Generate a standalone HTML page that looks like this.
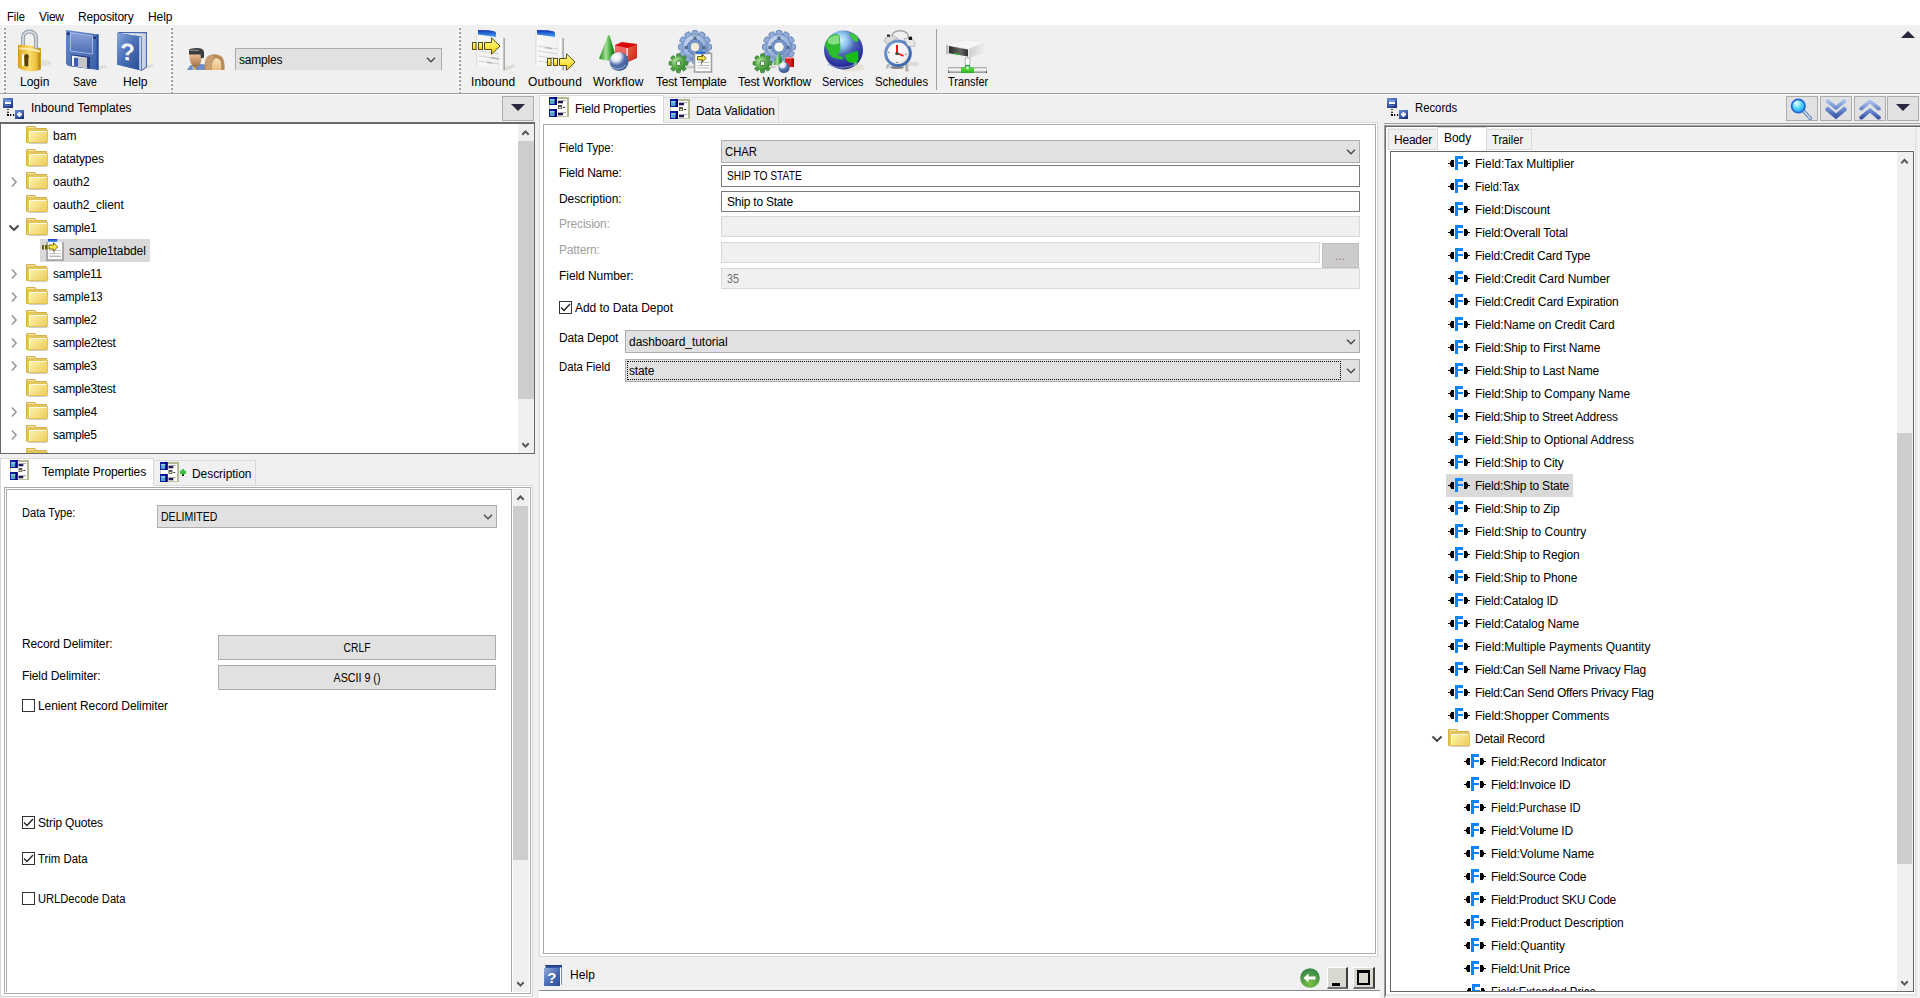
<!DOCTYPE html><html><head><meta charset="utf-8"><title>Template Designer</title><style>
*{box-sizing:border-box;margin:0;padding:0}
html,body{width:1920px;height:998px;overflow:hidden;background:#f0f0f0}
body{font-family:"Liberation Sans",sans-serif;font-size:12px;color:#000;position:relative}
.a{position:absolute}
.t{position:absolute;white-space:nowrap;line-height:16px;height:16px}
.combo{position:absolute;background:#e1e1e1;border:1px solid #adadad}
.inp{position:absolute;background:#fff;border:1px solid #7a7a7a}
.dis{position:absolute;background:#f0f0f0;border:1px solid #d9d9d9;box-shadow:0 1px 0 #fff}
.btn{position:absolute;background:#e1e1e1;border:1px solid #adadad;text-align:center}
.cb{position:absolute;width:13px;height:13px;border:1px solid #333;background:#fff}
.sb{position:absolute;background:#f0f0f0}
.th{position:absolute;background:#cdcdcd}
svg{position:absolute;overflow:visible}
</style></head><body>
<div class="a" style="left:0;top:0;width:1920px;height:25px;background:#fff"></div>
<div class="t" style="left:7px;top:9px;transform:scaleX(0.9305);transform-origin:left center;">File</div>
<div class="t" style="left:39px;top:9px;letter-spacing:-0.274px;">View</div>
<div class="t" style="left:78px;top:9px;letter-spacing:-0.186px;">Repository</div>
<div class="t" style="left:148px;top:9px;letter-spacing:-0.097px;">Help</div>
<div class="a" style="left:0;top:25px;width:1920px;height:68px;background:#f0f0f0"></div>
<div class="a" style="left:0;top:93px;width:1920px;height:1px;background:#a0a0a0"></div>
<div class="a" style="left:0;top:94px;width:1920px;height:1px;background:#fff"></div>
<svg style="left:3px;top:27px" width="3" height="66"><rect width="3" height="66" fill="url(#gripp)"/></svg>
<svg style="left:170px;top:27px" width="3" height="66"><rect width="3" height="66" fill="url(#gripp)"/></svg>
<svg style="left:458px;top:27px" width="3" height="66"><rect width="3" height="66" fill="url(#gripp)"/></svg>
<div class="a" style="left:936px;top:29px;width:1px;height:61px;background:#a0a0a0"></div>
<div class="t" style="left:20px;top:74px;">Login</div>
<div class="t" style="left:73px;top:74px;transform:scaleX(0.8736);transform-origin:left center;">Save</div>
<div class="t" style="left:123px;top:74px;letter-spacing:-0.047px;">Help</div>
<div class="t" style="left:471px;top:74px;letter-spacing:0.144px;">Inbound</div>
<div class="t" style="left:528px;top:74px;letter-spacing:0.160px;">Outbound</div>
<div class="t" style="left:593px;top:74px;letter-spacing:0.184px;">Workflow</div>
<div class="t" style="left:656px;top:74px;letter-spacing:-0.264px;">Test Template</div>
<div class="t" style="left:738px;top:74px;letter-spacing:-0.105px;">Test Workflow</div>
<div class="t" style="left:822px;top:74px;transform:scaleX(0.9019);transform-origin:left center;">Services</div>
<div class="t" style="left:875px;top:74px;transform:scaleX(0.9474);transform-origin:left center;">Schedules</div>
<div class="t" style="left:948px;top:74px;transform:scaleX(0.9088);transform-origin:left center;">Transfer</div>
<div class="combo" style="left:235px;top:48px;width:207px;height:22px;border-bottom:none"></div>
<div class="t" style="left:239px;top:52px;letter-spacing:-0.213px;">samples</div>
<svg style="left:426px;top:57px" width="10" height="6"><path d="M1 0.8 L5 4.8 L9 0.8" fill="none" stroke="#444" stroke-width="1.25"/></svg>
<svg style="left:1901px;top:31px" width="14" height="8"><path d="M0 7 L7 0 L14 7 Z" fill="#2b2540"/></svg>
<!-- Login padlock -->
<svg style="left:10px;top:26px" width="50" height="50" viewBox="0 0 50 50">
<defs>
<linearGradient id="gpl" x1="0" y1="0" x2="1" y2="0"><stop offset="0" stop-color="#d09410"/><stop offset="0.12" stop-color="#e6b42c"/><stop offset="0.5" stop-color="#f9de6c"/><stop offset="0.8" stop-color="#edbe3c"/><stop offset="0.93" stop-color="#bf8818"/><stop offset="1" stop-color="#d8a830"/></linearGradient>
<linearGradient id="gsh" x1="0" y1="0" x2="1" y2="0"><stop offset="0" stop-color="#8e98a4"/><stop offset="0.5" stop-color="#e4e8ec"/><stop offset="1" stop-color="#98a2ae"/></linearGradient>
</defs>
<ellipse cx="35" cy="37" rx="6" ry="3" fill="#dcdcd4" opacity=".8"/>
<path d="M13 20 V11.5 a6.5 6 0 0 1 13 0 V23" fill="none" stroke="#98a2ae" stroke-width="4"/>
<path d="M13 20 V11.5 a6.5 6 0 0 1 13 0 V23" fill="none" stroke="#e2e6ea" stroke-width="1.4"/>
<path d="M8 19 Q14 18.5 20 19.5 Q26 20.5 31 22.5 V43.5 Q26 45.8 19 45.2 Q12 44.5 8 41.5 Z" fill="url(#gpl)"/>
<path d="M9.5 22.500 Q18 22 30 25.500" fill="none" stroke="#fff2b8" stroke-width="2" opacity=".9"/><path d="M26 18 V22.600" stroke="#98a2ae" stroke-width="4"/><path d="M26 18 V22" stroke="#e2e6ea" stroke-width="1.400"/>
<rect x="12" y="28" width="2" height="12" fill="#fff" opacity=".9"/>
<path d="M14.2 30.5 a2.3 2.6 0 1 1 4.2 1.6 L18.2 40.5 L14.6 40 Z" fill="#5c3e08"/>
</svg>
<!-- Save floppy -->
<svg style="left:60px;top:26px" width="50" height="50" viewBox="0 0 50 50">
<defs>
<linearGradient id="gfl" x1="0" y1="0" x2="1" y2="1"><stop offset="0" stop-color="#6488cc"/><stop offset="1" stop-color="#3a60a8"/></linearGradient>
<linearGradient id="gfl2" x1="0" y1="0" x2="0" y2="1"><stop offset="0" stop-color="#8aa2da"/><stop offset="1" stop-color="#4c6cb4"/></linearGradient>
</defs>
<path d="M39 40 L46 39 L46 42 L39 44 Z" fill="#d8d8d0" opacity=".7"/>
<path d="M6 4 L38.5 8.5 L38.5 44 L8 40 L6 37.5 Z" fill="url(#gfl)"/>
<path d="M36.5 8.3 L38.5 8.5 L38.5 44 L36.5 43.7 Z" fill="#2c4c94"/>
<path d="M10.5 6.5 L32.5 9.8 L32.5 28 L10.5 25 Z" fill="url(#gfl2)" stroke="#b6c6ea" stroke-width="0.8"/>
<rect x="7" y="6.5" width="2.6" height="2.6" fill="#1c2c6c"/><path d="M33.2 10.6 l2.8 .4 v2 l-2.8 -.4z" fill="#1c2c6c"/>
<path d="M11.5 28.2 L30 31 L30 42.8 L11.5 40.2 Z" fill="#263c80"/>
<path d="M12 29.6 L27 31.8 L27 42.2 L12 39.8 Z" fill="#f4f4f4"/>
<path d="M18.5 31 L27 32.2 L27 41.8 L18.5 40.6 Z" fill="#c4c4c4"/>
<path d="M14 31.4 L18.2 32 L18.2 40.4 L14 39.8 Z" fill="#3c5cb0"/>
</svg>
<!-- Help book -->
<svg style="left:110px;top:26px" width="50" height="50" viewBox="0 0 50 50">
<defs>
<linearGradient id="gbk" x1="0" y1="0" x2="1" y2="1"><stop offset="0" stop-color="#8aa6de"/><stop offset="0.45" stop-color="#4a70b8"/><stop offset="1" stop-color="#244a90"/></linearGradient>
<linearGradient id="gpg" x1="0" y1="0" x2="1" y2="0"><stop offset="0" stop-color="#fff"/><stop offset="0.7" stop-color="#e4e4e4"/><stop offset="1" stop-color="#c4ccd8"/></linearGradient>
</defs>
<path d="M37 39 L43 38 L43 41 L36 43 Z" fill="#d8d8d0" opacity=".7"/>
<path d="M7 7 L9 6 L37 6 L37 41 L32 45 Z" fill="#4468b4"/>
<path d="M9.5 7.2 L36 7.2 L36 40.5 L31.5 44.2 L31.5 10.5 Z" fill="url(#gpg)"/>
<path d="M7 7 L31.5 10.5 L31.5 44.8 L7 38.8 Z" fill="url(#gbk)"/>
<path d="M29.2 10.8 L31 11 L31 44 L29.2 43.6 Z" fill="#d8e2f4" opacity=".9"/>
<text x="17.6" y="34.5" font-family="Liberation Sans,sans-serif" font-weight="bold" font-size="24" text-anchor="middle" fill="#f6f6f6" transform="skewY(6) translate(0,-2)">?</text>
</svg>
<!-- Users -->
<svg style="left:185px;top:46px" width="42" height="24" viewBox="0 0 42 24">
<defs>
<linearGradient id="gfc" x1="0" y1="0" x2="0" y2="1"><stop offset="0" stop-color="#eec09a"/><stop offset="1" stop-color="#9e6c3c"/></linearGradient>
<linearGradient id="gfw" x1="0" y1="0" x2="0" y2="1"><stop offset="0" stop-color="#f8e4bc"/><stop offset="1" stop-color="#ecba7c"/></linearGradient>
<clipPath id="cu"><rect x="0" y="0" width="42" height="24"/></clipPath>
</defs>
<g clip-path="url(#cu)">
<path d="M2 24 L5 19.5 L10 18 L17 18 L21 19 L23 24 Z" fill="#6c8ccc"/>
<path d="M7.5 20 L11 24 L8 24 Z" fill="#fff"/><rect x="8.4" y="21" width="2.6" height="3" fill="#c8a850"/>
<path d="M4.4 8 L16 8 L16.5 14 Q16 18 13 20.5 Q10.5 22.5 8 20 Q5 17 4.6 13 Z" fill="url(#gfc)"/>
<path d="M4 3.6 Q6 2 12 2 Q18.5 2.2 19 6 L19 11.5 L16 12.5 L15.5 8.4 L4 8.4 Z" fill="#3c3c3c"/>
<path d="M4.6 4.4 L14 4.4" stroke="#8a8a8a" stroke-width="1.2"/>
<path d="M19.5 24 Q18.6 12 25 9 Q31 7 36 10 Q40 13 39.6 24 Z" fill="#bc8c58"/>
<path d="M22 10.5 Q26 8.4 29.4 10.2 Q27 14 26.6 24 L21 24 Q20.6 14 22 10.5Z" fill="#cca478" opacity=".8"/>
<path d="M27 24 Q26.6 15 30 12.4 Q33.5 11.6 35.6 15 Q36.6 19 36 24 Z" fill="url(#gfw)"/>
</g>
</svg>
<!-- Inbound -->
<svg style="left:466px;top:26px" width="60" height="50" viewBox="0 0 60 50">
<defs>
<linearGradient id="gdoc" x1="0" y1="0" x2="1" y2="0"><stop offset="0" stop-color="#dcdcdc"/><stop offset="0.08" stop-color="#f8f8f8"/><stop offset="0.82" stop-color="#f0f0f0"/><stop offset="0.9" stop-color="#fff"/><stop offset="0.94" stop-color="#d8d8d8"/><stop offset="1" stop-color="#8c8c8c"/></linearGradient>
<linearGradient id="gbh" x1="0" y1="0" x2="0" y2="1"><stop offset="0" stop-color="#1030b8"/><stop offset="1" stop-color="#48a8f4"/></linearGradient>
<linearGradient id="gar" x1="0" y1="0" x2="0" y2="1"><stop offset="0" stop-color="#ffffa0"/><stop offset="0.5" stop-color="#ffe850"/><stop offset="1" stop-color="#f8c800"/></linearGradient>
<g id="docpg">
<path d="M39 41 L49 38 L49 41 L40 45 Z" fill="#d4d4cc" opacity=".7"/>
<path d="M10.2 8 L38.8 12 L38.8 44.6 L10.2 39.6 Z" fill="url(#gdoc)"/>
<path d="M12 4 L23 4.2 L29 5.6 L30 7 L30 11 L12 8.4 Z" fill="url(#gbh)"/>
<path d="M13 20 l20 3 M13 25 l20 3 M13 30 l20 3 M13 35 l20 3" stroke="#d0d4d4" stroke-width="1"/>
<path d="M20 21.6 l7 1 M25 31.8 l8 1.2 M21 36.2 l5 .8" stroke="#b4b4b4" stroke-width="1.4"/>
</g>
<g id="yarr">
<rect x="0.5" y="5.500" width="3.500" height="7" fill="url(#gar)" stroke="#585010" stroke-width="1"/>
<rect x="6.500" y="5.500" width="4" height="7" fill="url(#gar)" stroke="#585010" stroke-width="1"/>
<path d="M12.500 5.500 H19.500 V0.800 L28 9 L19.500 17.200 V12.500 H12.500 Z" fill="url(#gar)" stroke="#585010" stroke-width="1" stroke-linejoin="round"/>
</g>
</defs>
<use href="#docpg"/>
<use href="#yarr" x="6" y="11"/>
</svg>
<!-- Outbound -->
<svg style="left:525px;top:26px" width="60" height="50" viewBox="0 0 60 50">
<use href="#docpg"/>
<use href="#yarr" x="22" y="27"/>
</svg>
<!-- Workflow -->
<svg style="left:590px;top:26px" width="60" height="50" viewBox="0 0 60 50">
<defs>
<linearGradient id="gcone" x1="0" y1="0" x2="1" y2="0"><stop offset="0" stop-color="#1c8c1c"/><stop offset="0.4" stop-color="#a8e098"/><stop offset="0.7" stop-color="#2c9c2c"/><stop offset="1" stop-color="#0c640c"/></linearGradient>
<radialGradient id="gsph" cx="0.35" cy="0.25" r="0.8"><stop offset="0" stop-color="#fff"/><stop offset="0.3" stop-color="#e4e8f4"/><stop offset="0.55" stop-color="#5474b0"/><stop offset="1" stop-color="#34548c"/></radialGradient>
<linearGradient id="gcl" x1="0" y1="0" x2="0" y2="1"><stop offset="0" stop-color="#f47474"/><stop offset="1" stop-color="#dc4040"/></linearGradient>
<linearGradient id="gcr" x1="0" y1="0" x2="1" y2="1"><stop offset="0" stop-color="#ec5c48"/><stop offset="1" stop-color="#bc2c10"/></linearGradient>
<g id="wfshapes">
<path d="M18 9.500 Q19 9 19.800 10 L26.500 32.500 Q18 36.500 9 32.500 Z" fill="url(#gcone)"/>
<path d="M25 19 L32 16 L47 18 L47 32 L39 35.500 L25 32 Z" fill="#d80808"/>
<path d="M25 19.500 L37.500 22 L37.500 35 L25 32 Z" fill="url(#gcl)"/>
<path d="M37.500 22 L47 18.500 L47 31.500 L37.500 35.500 Z" fill="url(#gcr)"/>
<path d="M36.300 22 L38 22 L38 30 L36.300 30 Z" fill="#fff" opacity=".7"/>
<circle cx="29" cy="35.500" r="9.500" fill="url(#gsph)"/>
<path d="M22 41 Q29 46 36 39" fill="none" stroke="#c8d0e8" stroke-width="1" opacity=".8"/>
</g>
</defs>
<use href="#wfshapes"/>
</svg>
<!-- Test Template -->
<svg style="left:660px;top:26px" width="60" height="50" viewBox="0 0 60 50">
<defs>
<radialGradient id="ggb" cx="0.35" cy="0.3" r="0.8"><stop offset="0" stop-color="#d0dcf0"/><stop offset="0.6" stop-color="#9cb4dc"/><stop offset="1" stop-color="#6484bc"/></radialGradient>
<radialGradient id="ggg" cx="0.35" cy="0.35" r="0.8"><stop offset="0" stop-color="#c0eca8"/><stop offset="0.55" stop-color="#5cac4c"/><stop offset="1" stop-color="#28742c"/></radialGradient>
<g id="biggear">
<g fill="#94acd8" stroke="#5878b0" stroke-width="0.8">
<rect x="-3" y="-16.500" width="6" height="8" rx="2"/><rect x="-3" y="-16.500" width="6" height="8" rx="2" transform="rotate(30)"/><rect x="-3" y="-16.500" width="6" height="8" rx="2" transform="rotate(60)"/><rect x="-3" y="-16.500" width="6" height="8" rx="2" transform="rotate(90)"/><rect x="-3" y="-16.500" width="6" height="8" rx="2" transform="rotate(120)"/><rect x="-3" y="-16.500" width="6" height="8" rx="2" transform="rotate(150)"/><rect x="-3" y="-16.500" width="6" height="8" rx="2" transform="rotate(180)"/><rect x="-3" y="-16.500" width="6" height="8" rx="2" transform="rotate(210)"/><rect x="-3" y="-16.500" width="6" height="8" rx="2" transform="rotate(240)"/><rect x="-3" y="-16.500" width="6" height="8" rx="2" transform="rotate(270)"/><rect x="-3" y="-16.500" width="6" height="8" rx="2" transform="rotate(300)"/><rect x="-3" y="-16.500" width="6" height="8" rx="2" transform="rotate(330)"/>
</g>
<circle r="12.500" fill="url(#ggb)" stroke="#6484bc" stroke-width="0.600"/>
<circle r="7.600" fill="#7c9cd0" stroke="#5474ac" stroke-width="1"/>
<rect x="-1.500" y="-10.500" width="3" height="3" fill="#566c8c"/><rect x="-10.500" y="-1" width="3" height="3" fill="#566c8c"/><rect x="7.500" y="-1" width="3" height="3" fill="#566c8c"/>
<circle r="5" fill="#f0ecdc" stroke="#5474ac" stroke-width="1"/>
</g>
<g id="smgear">
<g fill="#4c9c40" stroke="#2c7c30" stroke-width="0.700">
<rect x="-2" y="-9.500" width="4" height="5" rx="1.300"/><rect x="-2" y="-9.500" width="4" height="5" rx="1.300" transform="rotate(45)"/><rect x="-2" y="-9.500" width="4" height="5" rx="1.300" transform="rotate(90)"/><rect x="-2" y="-9.500" width="4" height="5" rx="1.300" transform="rotate(135)"/><rect x="-2" y="-9.500" width="4" height="5" rx="1.300" transform="rotate(180)"/><rect x="-2" y="-9.500" width="4" height="5" rx="1.300" transform="rotate(225)"/><rect x="-2" y="-9.500" width="4" height="5" rx="1.300" transform="rotate(270)"/><rect x="-2" y="-9.500" width="4" height="5" rx="1.300" transform="rotate(315)"/>
</g>
<circle r="7" fill="url(#ggg)"/>
<rect x="-2.300" y="-2.300" width="4.600" height="4.600" rx="1" fill="#e8f0e0" stroke="#2c742c" stroke-width="1"/>
</g>
</defs>
<use href="#biggear" x="35" y="21"/>
<ellipse cx="30" cy="41" rx="4" ry="1.500" fill="#b8b8b8" opacity=".7"/>
<use href="#smgear" x="18.500" y="37.300"/>
<rect x="34.500" y="27.500" width="17" height="18.500" fill="#fff" stroke="#a0a0a0" stroke-width="1.600"/>
<rect x="36" y="25.800" width="9" height="1.800" fill="#1468e0"/>
<path d="M37.500 39.500 h12 M37.500 42 h12 M37.500 36.500 h12" stroke="#bcbcbc" stroke-width="1.200"/>
<path d="M41.500 28 v11" stroke="#787878" stroke-width="0.800"/>
<path d="M37.500 30.500 h5 v-2 l3.500 3.800 l-3.500 3.600 v-2 h-5 z" fill="#fce838" stroke="#5c5408" stroke-width="0.900" stroke-linejoin="round"/>
</svg>
<!-- Test Workflow -->
<svg style="left:744px;top:26px" width="60" height="50" viewBox="0 0 60 50">
<use href="#biggear" x="35" y="21"/>
<circle cx="35" cy="21" r="4.600" fill="#f8f8f4"/>
<ellipse cx="29" cy="41" rx="3" ry="1.300" fill="#b8b8b8" opacity=".7"/>
<use href="#smgear" x="18.500" y="37.300"/>
<path d="M34.500 26.500 Q35 26 35.500 26.500 L38.800 38.500 Q34.500 40.500 29.500 38.500 Z" fill="url(#gcone)"/>
<rect x="41" y="31" width="9" height="10" fill="#e02020"/><rect x="41" y="31" width="9" height="1.600" fill="#fc9c9c"/><rect x="47.500" y="32.600" width="2.500" height="8.400" fill="#b80808"/>
<circle cx="40" cy="41.500" r="5.600" fill="url(#gsph)"/>
</svg>
<!-- Services globe -->
<svg style="left:812px;top:26px" width="60" height="50" viewBox="0 0 60 50">
<defs>
<radialGradient id="ggl" cx="0.42" cy="0.25" r="0.75"><stop offset="0" stop-color="#d4f4fc"/><stop offset="0.25" stop-color="#8cc4ec"/><stop offset="0.5" stop-color="#4c64b4"/><stop offset="0.85" stop-color="#28309c"/><stop offset="1" stop-color="#1c2078"/></radialGradient>
<clipPath id="cgl"><circle cx="31.500" cy="24" r="19.300"/></clipPath>
</defs>
<ellipse cx="40" cy="41.500" rx="13" ry="4" fill="#e0dccc" opacity=".7"/>
<circle cx="31.500" cy="24" r="19.500" fill="url(#ggl)"/>
<g clip-path="url(#cgl)">
<path d="M13 16 Q16 9 24 8 Q28 8 28 12 L28.500 24 Q28 28 25 29 L32 31.500 L30 33.500 L22 32 Q17 30 16 24 Q13 22 13 16 Z" fill="#2cbc2c"/>
<path d="M16 13 Q22 8 27 9.500 L27.500 17 Q22 20 16 17 Z" fill="#a4e8a4" opacity=".75"/>
<path d="M33 29 Q40 26 46 25 L46.500 34 Q44 38 38 36.500 Q34 36 33 29 Z" fill="#18bc18"/>
<path d="M37 7 Q44 7 46 12 Q47 15 44 16 Q40 14 37 7 Z" fill="#38c838"/>
<path d="M42 36 l3 0 l-1 4 l-2.500 0 z" fill="#58c068"/>
</g>
<path d="M16 38 Q30 46 46 37" fill="none" stroke="#8c9cd4" stroke-width="2" opacity=".6"/>
</svg>
<!-- Schedules clock -->
<svg style="left:872px;top:26px" width="60" height="50" viewBox="0 0 60 50">
<defs>
<radialGradient id="gck" cx="0.4" cy="0.35" r="0.7"><stop offset="0" stop-color="#fff"/><stop offset="0.8" stop-color="#f0f0f0"/><stop offset="1" stop-color="#d4d4d4"/></radialGradient>
<linearGradient id="gcb" x1="0" y1="0" x2="1" y2="1"><stop offset="0" stop-color="#7ca0dc"/><stop offset="1" stop-color="#2c58a0"/></linearGradient>
</defs>
<ellipse cx="41" cy="38" rx="6" ry="2.500" fill="#d8d8d0" opacity=".8"/>
<path d="M19.500 12 Q19.500 4.800 28 4.800 Q36.500 4.800 36.500 12" fill="none" stroke="#a4a8ac" stroke-width="1.400"/>
<path d="M15 38 l3 0 l-1.500 4.500 l-3 0 z" fill="#b8b8b8"/><path d="M33 38 l3 0 l.5 7.500 l-3 0 z" fill="#b0b0b0"/>
<ellipse cx="25" cy="41.500" rx="7" ry="1.600" fill="#707070" opacity=".8"/>
<circle cx="26" cy="27.300" r="13.800" fill="url(#gcb)"/>
<circle cx="26" cy="27.300" r="10.800" fill="url(#gck)"/>
<path d="M12 15.500 L14 11.500 L21 9.500 L25.500 12 L15 18 Z" fill="#dcdcdc" stroke="#9c9c9c" stroke-width="0.600"/>
<rect x="15" y="8.600" width="3" height="2" fill="#202020"/>
<path d="M32 12.500 L40 12 L43 16.500 L42.500 20.500 L36 20 Z" fill="#e8e8e8" stroke="#9c9c9c" stroke-width="0.600"/>
<rect x="36.800" y="10.600" width="3.200" height="3.400" fill="#181818"/>
<path d="M16 26.300 h2 M33 28.300 h2 M24 36.500 h2" stroke="#707070" stroke-width="0.800"/>
<rect x="24" y="19" width="2" height="8" fill="#f41414"/>
<path d="M26 27.500 L31.500 30" stroke="#f41414" stroke-width="1.800"/>
<ellipse cx="25" cy="27.500" rx="1.900" ry="1.500" fill="#484848"/>
</svg>
<!-- Transfer -->
<svg style="left:938px;top:26px" width="60" height="50" viewBox="0 0 60 50">
<defs>
<linearGradient id="gtp" x1="0" y1="0" x2="0" y2="1"><stop offset="0" stop-color="#a0a0a0"/><stop offset="0.45" stop-color="#fff"/><stop offset="1" stop-color="#8c8c8c"/></linearGradient>
<linearGradient id="gts" x1="0" y1="0" x2="1" y2="0"><stop offset="0" stop-color="#2c2c2c"/><stop offset="0.6" stop-color="#686868"/><stop offset="1" stop-color="#303030"/></linearGradient>
<linearGradient id="gtr" x1="0" y1="0" x2="1" y2="0"><stop offset="0" stop-color="#d0d0d0"/><stop offset="1" stop-color="#f2f2f2"/></linearGradient>
<linearGradient id="ggn" x1="0" y1="0" x2="0" y2="1"><stop offset="0" stop-color="#1c9c3c"/><stop offset="0.5" stop-color="#58d838"/><stop offset="1" stop-color="#28a828"/></linearGradient>
</defs>
<path d="M8 19 L26 14 L48.800 15 L31 23 Z" fill="#f6f6f6" stroke="#e0e0e0" stroke-width="0.500"/>
<path d="M31 23 L48.800 15 L48.800 25.500 L31 32 Z" fill="url(#gtr)"/>
<path d="M8 19 L31 23 L31 32 L8 28 Z" fill="#ececec"/>
<path d="M8 19 L10.500 19.400 L10.500 28.400 L8 28 Z" fill="#bcbcbc"/>
<path d="M11 20 L30 23.400 L30 30.600 L11 27.200 Z" fill="url(#gts)"/>
<path d="M16 27.300 L22 28.500" stroke="#20c020" stroke-width="1.200"/>
<rect x="27.300" y="32" width="4.600" height="9" fill="#fcfcfc" stroke="#a8a8a8" stroke-width="0.800"/>
<rect x="10" y="41" width="39" height="6" fill="url(#gtp)"/>
<path d="M10 43 l1 4 h-1z M49 43 l-1 4 h1z" fill="#404040"/>
<path d="M23 41.500 h4 v-2.500 h5 v2.500 h4 v5.500 h-13 z" fill="url(#ggn)"/>
<rect x="28.300" y="40.300" width="2.400" height="3" fill="#e8f8e0"/>
</svg>

<div class="t" style="left:31px;top:100px;letter-spacing:-0.040px;">Inbound Templates</div>
<div class="btn" style="left:502px;top:96px;width:32px;height:25px"></div>
<svg style="left:511px;top:104px" width="14" height="7"><path d="M0 0 L14 0 L7 7 Z" fill="#2b2540"/></svg>
<div class="a" style="left:0;top:122px;width:535px;height:332px;background:#fff;border:1px solid #696969;border-top:2px solid #696969"></div>
<div class="sb" style="left:518px;top:124px;width:16px;height:329px"></div>
<div class="th" style="left:518px;top:141px;width:16px;height:258px"></div>
<svg style="left:26px;top:126px" width="22" height="18" viewBox="0 0 22 18"><use href="#fold"/></svg>
<div class="t" style="left:53px;top:128px;letter-spacing:0.052px;">bam</div>
<svg style="left:26px;top:149px" width="22" height="18" viewBox="0 0 22 18"><use href="#fold"/></svg>
<div class="t" style="left:53px;top:151px;letter-spacing:-0.139px;">datatypes</div>
<svg style="left:11px;top:177px" width="6" height="10"><path d="M1 0.5 L5 5 L1 9.5" fill="none" stroke="#9c9c9c" stroke-width="1.7"/></svg>
<svg style="left:26px;top:172px" width="22" height="18" viewBox="0 0 22 18"><use href="#fold"/></svg>
<div class="t" style="left:53px;top:174px;">oauth2</div>
<svg style="left:26px;top:195px" width="22" height="18" viewBox="0 0 22 18"><use href="#fold"/></svg>
<div class="t" style="left:53px;top:197px;letter-spacing:-0.053px;">oauth2_client</div>
<svg style="left:9px;top:225px" width="10" height="6"><path d="M0.5 0.5 L5 5 L9.5 0.5" fill="none" stroke="#404040" stroke-width="1.8"/></svg>
<svg style="left:26px;top:218px" width="22" height="18" viewBox="0 0 22 18"><use href="#fold"/></svg>
<div class="t" style="left:53px;top:220px;letter-spacing:-0.266px;">sample1</div>
<div class="a" style="left:40px;top:239px;width:110px;height:23px;background:#d9d9d9"></div>
<svg style="left:40px;top:239px" width="26" height="23" viewBox="0 0 26 23"><use href="#tpl"/></svg>
<div class="t" style="left:69px;top:243px;letter-spacing:-0.105px;">sample1tabdel</div>
<svg style="left:11px;top:269px" width="6" height="10"><path d="M1 0.5 L5 5 L1 9.5" fill="none" stroke="#9c9c9c" stroke-width="1.7"/></svg>
<svg style="left:26px;top:264px" width="22" height="18" viewBox="0 0 22 18"><use href="#fold"/></svg>
<div class="t" style="left:53px;top:266px;letter-spacing:-0.268px;">sample11</div>
<svg style="left:11px;top:292px" width="6" height="10"><path d="M1 0.5 L5 5 L1 9.5" fill="none" stroke="#9c9c9c" stroke-width="1.7"/></svg>
<svg style="left:26px;top:287px" width="22" height="18" viewBox="0 0 22 18"><use href="#fold"/></svg>
<div class="t" style="left:53px;top:289px;transform:scaleX(0.9533);transform-origin:left center;">sample13</div>
<svg style="left:11px;top:315px" width="6" height="10"><path d="M1 0.5 L5 5 L1 9.5" fill="none" stroke="#9c9c9c" stroke-width="1.7"/></svg>
<svg style="left:26px;top:310px" width="22" height="18" viewBox="0 0 22 18"><use href="#fold"/></svg>
<div class="t" style="left:53px;top:312px;letter-spacing:-0.237px;">sample2</div>
<svg style="left:11px;top:338px" width="6" height="10"><path d="M1 0.5 L5 5 L1 9.5" fill="none" stroke="#9c9c9c" stroke-width="1.7"/></svg>
<svg style="left:26px;top:333px" width="22" height="18" viewBox="0 0 22 18"><use href="#fold"/></svg>
<div class="t" style="left:53px;top:335px;letter-spacing:-0.191px;">sample2test</div>
<svg style="left:11px;top:361px" width="6" height="10"><path d="M1 0.5 L5 5 L1 9.5" fill="none" stroke="#9c9c9c" stroke-width="1.7"/></svg>
<svg style="left:26px;top:356px" width="22" height="18" viewBox="0 0 22 18"><use href="#fold"/></svg>
<div class="t" style="left:53px;top:358px;letter-spacing:-0.237px;">sample3</div>
<svg style="left:26px;top:379px" width="22" height="18" viewBox="0 0 22 18"><use href="#fold"/></svg>
<div class="t" style="left:53px;top:381px;letter-spacing:-0.191px;">sample3test</div>
<svg style="left:11px;top:407px" width="6" height="10"><path d="M1 0.5 L5 5 L1 9.5" fill="none" stroke="#9c9c9c" stroke-width="1.7"/></svg>
<svg style="left:26px;top:402px" width="22" height="18" viewBox="0 0 22 18"><use href="#fold"/></svg>
<div class="t" style="left:53px;top:404px;letter-spacing:-0.194px;">sample4</div>
<svg style="left:11px;top:430px" width="6" height="10"><path d="M1 0.5 L5 5 L1 9.5" fill="none" stroke="#9c9c9c" stroke-width="1.7"/></svg>
<svg style="left:26px;top:425px" width="22" height="18" viewBox="0 0 22 18"><use href="#fold"/></svg>
<div class="t" style="left:53px;top:427px;letter-spacing:-0.237px;">sample5</div>
<div class="a" style="left:26px;top:448px;width:22px;height:5px;overflow:hidden"><svg style="left:0;top:0" width="22" height="18" viewBox="0 0 22 18"><use href="#fold"/></svg></div>
<div class="a" style="left:0px;top:458px;width:154px;height:28px;background:#fff;border:1px solid #d9d9d9;border-bottom:none"></div>
<div class="a" style="left:154px;top:460px;width:102px;height:26px;border:1px solid #d9d9d9;border-left:none;border-bottom:none"></div>
<svg style="left:10px;top:460px" width="19" height="20" viewBox="0 0 20 20" preserveAspectRatio="none"><use href="#prop"/></svg>
<div class="t" style="left:42px;top:464px;letter-spacing:-0.143px;">Template Properties</div>
<svg style="left:160px;top:462px" width="19" height="20" viewBox="0 0 20 20" preserveAspectRatio="none"><use href="#prop"/></svg>
<svg style="left:180px;top:469px" width="6" height="7"><path d="M2 0 h2 v1.500 h2 v3.500 h-2 v2 h-2 v-2 h-2 v-3.500 h2 z" fill="#38c438"/><rect x="2" y="5.300" width="2" height="1.700" fill="#0c300c"/></svg>
<div class="t" style="left:192px;top:466px;letter-spacing:-0.057px;">Description</div>
<div class="a" style="left:0;top:485px;width:533px;height:512px;border:1px solid #d9d9d9;background:#fff"></div>
<div class="a" style="left:1px;top:485px;width:153px;height:2px;background:#fff"></div>
<div class="a" style="left:4px;top:487px;width:527px;height:507px;border:1px solid #a9abb3;background:#fff"></div>
<div class="a" style="left:6px;top:489px;width:506px;height:503px;border:1px solid #a9abb3;border-bottom:none;background:#fff"></div>
<div class="sb" style="left:513px;top:489px;width:16px;height:503px"></div>
<div class="th" style="left:513px;top:506px;width:15px;height:354px"></div>
<div class="t" style="left:22px;top:505px;transform:scaleX(0.9234);transform-origin:left center;">Data Type:</div>
<div class="combo" style="left:157px;top:505px;width:340px;height:23px"></div>
<div class="t" style="left:161px;top:509px;transform:scaleX(0.8795);transform-origin:left center;">DELIMITED</div>
<svg style="left:483px;top:514px" width="10" height="6"><path d="M1 0.8 L5 4.8 L9 0.8" fill="none" stroke="#444" stroke-width="1.25"/></svg>
<div class="t" style="left:22px;top:636px;letter-spacing:-0.130px;">Record Delimiter:</div>
<div class="btn" style="left:218px;top:635px;width:278px;height:25px"></div>
<div class="t" style="left:256.5px;top:640px;width:200px;text-align:center;transform:scaleX(0.8550);transform-origin:center center;">CRLF</div>
<div class="t" style="left:22px;top:668px;letter-spacing:-0.101px;">Field Delimiter:</div>
<div class="btn" style="left:218px;top:665px;width:278px;height:25px"></div>
<div class="t" style="left:256.7px;top:670px;width:200px;text-align:center;transform:scaleX(0.8921);transform-origin:center center;">ASCII 9 ()</div>
<div class="cb" style="left:22px;top:699px"></div>
<div class="t" style="left:38px;top:698px;letter-spacing:-0.090px;">Lenient Record Delimiter</div>
<div class="cb" style="left:22px;top:816px"></div>
<svg style="left:23px;top:818px" width="11" height="9"><path d="M1 4.5 L4 7.5 L10 1" fill="none" stroke="#222" stroke-width="1.3"/></svg>
<div class="t" style="left:38px;top:815px;letter-spacing:-0.150px;">Strip Quotes</div>
<div class="cb" style="left:22px;top:852px"></div>
<svg style="left:23px;top:854px" width="11" height="9"><path d="M1 4.5 L4 7.5 L10 1" fill="none" stroke="#222" stroke-width="1.3"/></svg>
<div class="t" style="left:38px;top:851px;transform:scaleX(0.9477);transform-origin:left center;">Trim Data</div>
<div class="cb" style="left:22px;top:892px"></div>
<div class="t" style="left:38px;top:891px;transform:scaleX(0.9292);transform-origin:left center;">URLDecode Data</div>
<div class="a" style="left:539px;top:122px;width:839px;height:835px;border:1px solid #d9d9d9;background:#fff"></div>
<div class="a" style="left:539px;top:95px;width:125px;height:28px;background:#fff;border:1px solid #d9d9d9;border-bottom:none"></div>
<div class="a" style="left:664px;top:97px;width:115px;height:25px;border:1px solid #d9d9d9;border-left:none;border-bottom:none"></div>
<svg style="left:549px;top:97px" width="20" height="20" viewBox="0 0 20 20"><use href="#prop"/></svg>
<div class="t" style="left:575px;top:101px;letter-spacing:-0.215px;">Field Properties</div>
<svg style="left:670px;top:99px" width="20" height="20" viewBox="0 0 20 20"><use href="#prop"/></svg>
<div class="t" style="left:696px;top:103px;letter-spacing:-0.113px;">Data Validation</div>
<div class="a" style="left:543px;top:124px;width:833px;height:830px;border:1px solid #a9abb3;background:#fff"></div>
<div class="t" style="left:559px;top:140px;transform:scaleX(0.9336);transform-origin:left center;">Field Type:</div>
<div class="combo" style="left:721px;top:140px;width:639px;height:23px"></div>
<div class="t" style="left:725px;top:144px;transform:scaleX(0.9378);transform-origin:left center;">CHAR</div>
<svg style="left:1346px;top:149px" width="10" height="6"><path d="M1 0.8 L5 4.8 L9 0.8" fill="none" stroke="#444" stroke-width="1.25"/></svg>
<div class="t" style="left:559px;top:165px;letter-spacing:-0.199px;">Field Name:</div>
<div class="inp" style="left:721px;top:165px;width:639px;height:22px"></div>
<div class="t" style="left:727px;top:168px;transform:scaleX(0.8539);transform-origin:left center;">SHIP TO STATE</div>
<div class="t" style="left:559px;top:191px;letter-spacing:-0.072px;">Description:</div>
<div class="inp" style="left:721px;top:191px;width:639px;height:21px"></div>
<div class="t" style="left:727px;top:194px;letter-spacing:-0.217px;">Ship to State</div>
<div class="t" style="left:559px;top:216px;letter-spacing:-0.199px;color:#a0a0a0">Precision:</div>
<div class="dis" style="left:721px;top:216px;width:639px;height:21px"></div>
<div class="t" style="left:559px;top:242px;letter-spacing:-0.154px;color:#a0a0a0">Pattern:</div>
<div class="dis" style="left:721px;top:242px;width:599px;height:21px"></div>
<div class="a" style="left:1322px;top:243px;width:37px;height:25px;background:#cccccc;border:1px solid #bfbfbf"></div>
<div class="t" style="left:1335px;top:248px;color:#a08080">...</div>
<div class="t" style="left:559px;top:268px;letter-spacing:-0.058px;">Field Number:</div>
<div class="dis" style="left:721px;top:268px;width:639px;height:21px"></div>
<div class="t" style="left:727px;top:271px;transform:scaleX(0.8982);transform-origin:left center;color:#6d6d6d">35</div>
<div class="cb" style="left:559px;top:301px"></div>
<svg style="left:560px;top:303px" width="11" height="9"><path d="M1 4.5 L4 7.5 L10 1" fill="none" stroke="#222" stroke-width="1.3"/></svg>
<div class="t" style="left:575px;top:300px;letter-spacing:-0.043px;">Add to Data Depot</div>
<div class="t" style="left:559px;top:330px;letter-spacing:-0.150px;">Data Depot</div>
<div class="combo" style="left:625px;top:330px;width:735px;height:23px"></div>
<div class="t" style="left:629px;top:334px;letter-spacing:-0.045px;">dashboard_tutorial</div>
<svg style="left:1346px;top:339px" width="10" height="6"><path d="M1 0.8 L5 4.8 L9 0.8" fill="none" stroke="#444" stroke-width="1.25"/></svg>
<div class="t" style="left:559px;top:359px;transform:scaleX(0.9396);transform-origin:left center;">Data Field</div>
<div class="combo" style="left:625px;top:359px;width:735px;height:23px"></div>
<div class="a" style="left:627px;top:361px;width:714px;height:19px;border:1px dotted #000"></div>
<div class="t" style="left:629px;top:363px;letter-spacing:-0.163px;">state</div>
<svg style="left:1346px;top:368px" width="10" height="6"><path d="M1 0.8 L5 4.8 L9 0.8" fill="none" stroke="#444" stroke-width="1.25"/></svg>
<svg style="left:544px;top:965px" width="19" height="21" viewBox="0 0 19 21"><use href="#hlp"/></svg>
<div class="t" style="left:570px;top:967px;letter-spacing:0.078px;">Help</div>
<div class="a" style="left:539px;top:990px;width:841px;height:1px;background:#8a8a8a"></div>
<div class="a" style="left:539px;top:991px;width:841px;height:7px;background:#fff"></div>
<svg style="left:1299px;top:967px" width="22" height="22" viewBox="0 0 22 22"><use href="#back"/></svg>
<div class="a" style="left:1327px;top:967px;width:21px;height:22px;background:#d8d8d0;border-top:1px solid #fff;border-left:1px solid #fff;border-right:2px solid #404040;border-bottom:2px solid #707070"></div>
<div class="a" style="left:1332px;top:983px;width:8px;height:3px;background:#000"></div>
<div class="a" style="left:1353px;top:967px;width:22px;height:22px;background:#d8d8d0;border-top:1px solid #fff;border-left:1px solid #fff;border-right:2px solid #404040;border-bottom:2px solid #707070"></div>
<div class="a" style="left:1357px;top:970px;width:13px;height:15px;border:2px solid #000;border-top-width:3px"></div>
<svg style="left:1387px;top:98px" width="22" height="22" viewBox="0 0 22 22"><use href="#treeic"/></svg>
<svg style="left:3px;top:98px" width="22" height="22" viewBox="0 0 22 22"><use href="#treeic"/></svg>
<div class="t" style="left:1415px;top:100px;transform:scaleX(0.9421);transform-origin:left center;">Records</div>
<div class="btn" style="left:1786px;top:96px;width:32px;height:25px;overflow:hidden"></div>
<div class="btn" style="left:1820px;top:96px;width:32px;height:25px;overflow:hidden"></div>
<div class="btn" style="left:1854px;top:96px;width:32px;height:25px;overflow:hidden"></div>
<div class="btn" style="left:1887px;top:96px;width:32px;height:25px;overflow:hidden"></div>
<svg style="left:1896px;top:104px" width="14" height="7"><path d="M0 0 L14 0 L7 7 Z" fill="#2b2540"/></svg>
<svg style="left:1790px;top:98px" width="24" height="22" viewBox="0 0 24 22"><use href="#mag"/></svg>
<svg style="left:1824px;top:98px" width="24" height="22" viewBox="0 0 24 22"><use href="#dd"/></svg>
<svg style="left:1858px;top:98px" width="24" height="22" viewBox="0 0 24 22"><use href="#du"/></svg>
<div class="a" style="left:1384px;top:123px;width:536px;height:1px;background:#a0a0a0"></div>
<div class="a" style="left:1384px;top:125px;width:536px;height:873px;border-left:1px solid #a0a0a0;border-top:1px solid #a0a0a0;background:#f0f0f0"></div>
<div class="a" style="left:1385px;top:126px;width:535px;height:870px;border-left:1px solid #696969;border-top:1px solid #696969;background:#f0f0f0"></div>
<div class="a" style="left:1386px;top:127px;width:530px;height:868px;border:1px solid #fff;border-bottom-color:#e0e0e0;border-right-color:#e0e0e0"></div>
<div class="a" style="left:1916px;top:127px;width:2px;height:870px;background:#ececec"></div>
<div class="a" style="left:1918px;top:127px;width:1px;height:871px;background:#f9f9f9"></div>
<div class="a" style="left:1386px;top:995px;width:532px;height:2px;background:#ececec"></div>
<div class="a" style="left:1386px;top:997px;width:533px;height:1px;background:#f7f7f7"></div>
<div class="a" style="left:1388px;top:129px;width:49px;height:21px;border:1px solid #d9d9d9;border-right:none"></div>
<div class="a" style="left:1437px;top:127px;width:50px;height:25px;background:#fff;border:1px solid #d9d9d9;border-bottom:none"></div>
<div class="a" style="left:1487px;top:129px;width:45px;height:21px;border:1px solid #d9d9d9;border-left:none"></div>
<div class="t" style="left:1394px;top:132px;letter-spacing:-0.227px;">Header</div>
<div class="t" style="left:1444px;top:130px;letter-spacing:-0.065px;">Body</div>
<div class="t" style="left:1492px;top:132px;transform:scaleX(0.9296);transform-origin:left center;">Trailer</div>
<div class="a" style="left:1386px;top:150px;width:529px;height:844px;background:#fff"></div>
<div class="a" style="left:1390px;top:151px;width:524px;height:841px;border:1px solid #646464;background:#fff"></div>
<div class="sb" style="left:1897px;top:152px;width:16px;height:839px"></div>
<div class="th" style="left:1897px;top:433px;width:15px;height:431px"></div>
<svg style="left:1448px;top:156px" width="22" height="14" viewBox="0 0 22 14"><use href="#fic"/></svg>
<div class="t" style="left:1475px;top:156px;">Field:Tax Multiplier</div>
<svg style="left:1448px;top:179px" width="22" height="14" viewBox="0 0 22 14"><use href="#fic"/></svg>
<div class="t" style="left:1475px;top:179px;transform:scaleX(0.9202);transform-origin:left center;">Field:Tax</div>
<svg style="left:1448px;top:202px" width="22" height="14" viewBox="0 0 22 14"><use href="#fic"/></svg>
<div class="t" style="left:1475px;top:202px;letter-spacing:-0.067px;">Field:Discount</div>
<svg style="left:1448px;top:225px" width="22" height="14" viewBox="0 0 22 14"><use href="#fic"/></svg>
<div class="t" style="left:1475px;top:225px;letter-spacing:-0.159px;">Field:Overall Total</div>
<svg style="left:1448px;top:248px" width="22" height="14" viewBox="0 0 22 14"><use href="#fic"/></svg>
<div class="t" style="left:1475px;top:248px;letter-spacing:-0.207px;">Field:Credit Card Type</div>
<svg style="left:1448px;top:271px" width="22" height="14" viewBox="0 0 22 14"><use href="#fic"/></svg>
<div class="t" style="left:1475px;top:271px;letter-spacing:-0.072px;">Field:Credit Card Number</div>
<svg style="left:1448px;top:294px" width="22" height="14" viewBox="0 0 22 14"><use href="#fic"/></svg>
<div class="t" style="left:1475px;top:294px;letter-spacing:-0.140px;">Field:Credit Card Expiration</div>
<svg style="left:1448px;top:317px" width="22" height="14" viewBox="0 0 22 14"><use href="#fic"/></svg>
<div class="t" style="left:1475px;top:317px;letter-spacing:-0.129px;">Field:Name on Credit Card</div>
<svg style="left:1448px;top:340px" width="22" height="14" viewBox="0 0 22 14"><use href="#fic"/></svg>
<div class="t" style="left:1475px;top:340px;letter-spacing:-0.147px;">Field:Ship to First Name</div>
<svg style="left:1448px;top:363px" width="22" height="14" viewBox="0 0 22 14"><use href="#fic"/></svg>
<div class="t" style="left:1475px;top:363px;letter-spacing:-0.177px;">Field:Ship to Last Name</div>
<svg style="left:1448px;top:386px" width="22" height="14" viewBox="0 0 22 14"><use href="#fic"/></svg>
<div class="t" style="left:1475px;top:386px;letter-spacing:-0.067px;">Field:Ship to Company Name</div>
<svg style="left:1448px;top:409px" width="22" height="14" viewBox="0 0 22 14"><use href="#fic"/></svg>
<div class="t" style="left:1475px;top:409px;letter-spacing:-0.213px;">Field:Ship to Street Address</div>
<svg style="left:1448px;top:432px" width="22" height="14" viewBox="0 0 22 14"><use href="#fic"/></svg>
<div class="t" style="left:1475px;top:432px;letter-spacing:-0.081px;">Field:Ship to Optional Address</div>
<svg style="left:1448px;top:455px" width="22" height="14" viewBox="0 0 22 14"><use href="#fic"/></svg>
<div class="t" style="left:1475px;top:455px;letter-spacing:-0.111px;">Field:Ship to City</div>
<div class="a" style="left:1446px;top:474px;width:127px;height:23px;background:#d9d9d9"></div>
<svg style="left:1448px;top:478px" width="22" height="14" viewBox="0 0 22 14"><use href="#fic"/></svg>
<div class="t" style="left:1475px;top:478px;letter-spacing:-0.209px;">Field:Ship to State</div>
<svg style="left:1448px;top:501px" width="22" height="14" viewBox="0 0 22 14"><use href="#fic"/></svg>
<div class="t" style="left:1475px;top:501px;letter-spacing:-0.131px;">Field:Ship to Zip</div>
<svg style="left:1448px;top:524px" width="22" height="14" viewBox="0 0 22 14"><use href="#fic"/></svg>
<div class="t" style="left:1475px;top:524px;letter-spacing:-0.036px;">Field:Ship to Country</div>
<svg style="left:1448px;top:547px" width="22" height="14" viewBox="0 0 22 14"><use href="#fic"/></svg>
<div class="t" style="left:1475px;top:547px;letter-spacing:-0.174px;">Field:Ship to Region</div>
<svg style="left:1448px;top:570px" width="22" height="14" viewBox="0 0 22 14"><use href="#fic"/></svg>
<div class="t" style="left:1475px;top:570px;letter-spacing:-0.134px;">Field:Ship to Phone</div>
<svg style="left:1448px;top:593px" width="22" height="14" viewBox="0 0 22 14"><use href="#fic"/></svg>
<div class="t" style="left:1475px;top:593px;letter-spacing:-0.190px;">Field:Catalog ID</div>
<svg style="left:1448px;top:616px" width="22" height="14" viewBox="0 0 22 14"><use href="#fic"/></svg>
<div class="t" style="left:1475px;top:616px;letter-spacing:-0.115px;">Field:Catalog Name</div>
<svg style="left:1448px;top:639px" width="22" height="14" viewBox="0 0 22 14"><use href="#fic"/></svg>
<div class="t" style="left:1475px;top:639px;">Field:Multiple Payments Quantity</div>
<svg style="left:1448px;top:662px" width="22" height="14" viewBox="0 0 22 14"><use href="#fic"/></svg>
<div class="t" style="left:1475px;top:662px;letter-spacing:-0.269px;">Field:Can Sell Name Privacy Flag</div>
<svg style="left:1448px;top:685px" width="22" height="14" viewBox="0 0 22 14"><use href="#fic"/></svg>
<div class="t" style="left:1475px;top:685px;letter-spacing:-0.272px;">Field:Can Send Offers Privacy Flag</div>
<svg style="left:1448px;top:708px" width="22" height="14" viewBox="0 0 22 14"><use href="#fic"/></svg>
<div class="t" style="left:1475px;top:708px;letter-spacing:-0.089px;">Field:Shopper Comments</div>
<svg style="left:1432px;top:736px" width="10" height="6"><path d="M0.5 0.5 L5 5 L9.5 0.5" fill="none" stroke="#404040" stroke-width="1.8"/></svg>
<svg style="left:1448px;top:729px" width="22" height="18" viewBox="0 0 22 18"><use href="#fold"/></svg>
<div class="t" style="left:1475px;top:731px;letter-spacing:-0.239px;">Detail Record</div>
<svg style="left:1464px;top:754px" width="22" height="14" viewBox="0 0 22 14"><use href="#fic"/></svg>
<div class="t" style="left:1491px;top:754px;letter-spacing:-0.104px;">Field:Record Indicator</div>
<svg style="left:1464px;top:777px" width="22" height="14" viewBox="0 0 22 14"><use href="#fic"/></svg>
<div class="t" style="left:1491px;top:777px;letter-spacing:-0.194px;">Field:Invoice ID</div>
<svg style="left:1464px;top:800px" width="22" height="14" viewBox="0 0 22 14"><use href="#fic"/></svg>
<div class="t" style="left:1491px;top:800px;transform:scaleX(0.9405);transform-origin:left center;">Field:Purchase ID</div>
<svg style="left:1464px;top:823px" width="22" height="14" viewBox="0 0 22 14"><use href="#fic"/></svg>
<div class="t" style="left:1491px;top:823px;letter-spacing:-0.180px;">Field:Volume ID</div>
<svg style="left:1464px;top:846px" width="22" height="14" viewBox="0 0 22 14"><use href="#fic"/></svg>
<div class="t" style="left:1491px;top:846px;letter-spacing:-0.089px;">Field:Volume Name</div>
<svg style="left:1464px;top:869px" width="22" height="14" viewBox="0 0 22 14"><use href="#fic"/></svg>
<div class="t" style="left:1491px;top:869px;letter-spacing:-0.252px;">Field:Source Code</div>
<svg style="left:1464px;top:892px" width="22" height="14" viewBox="0 0 22 14"><use href="#fic"/></svg>
<div class="t" style="left:1491px;top:892px;letter-spacing:-0.261px;">Field:Product SKU Code</div>
<svg style="left:1464px;top:915px" width="22" height="14" viewBox="0 0 22 14"><use href="#fic"/></svg>
<div class="t" style="left:1491px;top:915px;letter-spacing:-0.054px;">Field:Product Description</div>
<svg style="left:1464px;top:938px" width="22" height="14" viewBox="0 0 22 14"><use href="#fic"/></svg>
<div class="t" style="left:1491px;top:938px;">Field:Quantity</div>
<svg style="left:1464px;top:961px" width="22" height="14" viewBox="0 0 22 14"><use href="#fic"/></svg>
<div class="t" style="left:1491px;top:961px;letter-spacing:-0.147px;">Field:Unit Price</div>
<div class="a" style="left:1391px;top:982px;width:500px;height:9px;overflow:hidden">
<svg style="left:74px;top:2px" width="21" height="14" viewBox="0 0 21 14"><use href="#fic"/></svg>
<div class="t" style="left:100px;top:2px;transform:scaleX(0.9455);transform-origin:left center;">Field:Extended Price</div></div>
<svg style="left:0;top:0" width="1" height="1"><path d="M522.3 134.7 L525.5 131.4 L528.7 134.7" fill="none" stroke="#555" stroke-width="2"/></svg>
<svg style="left:0;top:0" width="1" height="1"><path d="M522.3 443.3 L525.5 446.6 L528.7 443.3" fill="none" stroke="#555" stroke-width="2"/></svg>
<svg style="left:0;top:0" width="1" height="1"><path d="M517.3 499.7 L520.5 496.4 L523.7 499.7" fill="none" stroke="#555" stroke-width="2"/></svg>
<svg style="left:0;top:0" width="1" height="1"><path d="M517.3 982.3 L520.5 985.6 L523.7 982.3" fill="none" stroke="#555" stroke-width="2"/></svg>
<svg style="left:0;top:0" width="1" height="1"><path d="M1901.3 163.2 L1904.5 159.9 L1907.7 163.2" fill="none" stroke="#555" stroke-width="2"/></svg>
<svg style="left:0;top:0" width="1" height="1"><path d="M1901.3 981.3 L1904.5 984.6 L1907.7 981.3" fill="none" stroke="#555" stroke-width="2"/></svg>
<svg width="0" height="0" style="position:absolute"><defs>
<pattern id="gripp" width="3" height="4" patternUnits="userSpaceOnUse"><rect x="0" y="0" width="2" height="2" fill="#fff"/><rect x="1" y="1" width="2" height="2" fill="#a0a0a0"/></pattern>
<linearGradient id="gfold" x1="0" y1="0" x2="1" y2="0.6"><stop offset="0" stop-color="#fcf2b4"/><stop offset="0.55" stop-color="#f6e288"/><stop offset="1" stop-color="#efd064"/></linearGradient>
<g id="fold"><path d="M0.5 0.5 L9 0.5 L10.5 2.5 L20.5 2.5 L20.5 16.5 L0.5 16.5 Z" fill="#e4c45c" stroke="#d2b04a" stroke-width="1"/><path d="M1.5 1.5 L8.5 1.5" stroke="#f6e8a8" stroke-width="1"/><rect x="2.5" y="4.5" width="19" height="12" fill="url(#gfold)" stroke="#e2c458" stroke-width="1"/><path d="M3.5 15.5 L3.5 5.5 L20.5 5.5" fill="none" stroke="#fffbe6" stroke-width="1"/><rect x="3" y="17" width="18" height="1" fill="#b8b8b8" opacity=".7"/></g>
<g id="fic"><path d="M0 7 h2 v1 h-2z M2 5.5 h1 v4 h-1z M3 4 h3 v7 h-3z M16 4 h3 v7 h-3z M19 5.5 h1 v4 h-1z M20 7 h2 v1 h-2z" fill="#000"/><path d="M7 0 h8 v3 h-5 v3 h5 v2 h-5 v6 h-3z" fill="#0a84ff"/><path d="M0 4 h2 v1 h-2z M0 10 h2 v1 h-2z M20 4 h2 v1 h-2z M20 10 h2 v1 h-2z" fill="#e6e6d6"/></g>
<g id="prop"><rect x="0.5" y="0.5" width="19" height="19" fill="#fff"/><rect x="8" y="0" width="12" height="2" fill="#b6b690"/><rect x="18" y="0" width="2" height="20" fill="#b6b690"/><rect x="8" y="19" width="12" height="1" fill="#c4c49c"/><rect x="0" y="8" width="1" height="4" fill="#c8c8a0"/><rect x="0" y="0" width="8" height="8" fill="#0c1c9c"/><rect x="5.500" y="0" width="2.500" height="8" fill="#00007c"/><rect x="1" y="2" width="4.500" height="5" fill="#58a4cc"/><rect x="1" y="2" width="4.500" height="1.500" fill="#8cd0ec"/><rect x="0" y="12" width="8" height="8" fill="#0c1c9c"/><rect x="5.500" y="12" width="2.500" height="8" fill="#00007c"/><rect x="1" y="14" width="4.500" height="5" fill="#58a4cc"/><rect x="1" y="14" width="4.500" height="1.500" fill="#8cd0ec"/><rect x="9" y="3.300" width="8" height="0.800" fill="#8c8c8c"/><rect x="9" y="4" width="5" height="2.300" fill="#1c1c50"/><rect x="9" y="15.300" width="8" height="0.800" fill="#8c8c8c"/><rect x="9" y="16" width="5" height="2.300" fill="#1c1c50"/><rect x="9" y="8" width="4" height="4" fill="#585858"/><rect x="10" y="10" width="2" height="1.300" fill="#f4f4a8"/><rect x="14" y="10" width="2" height="1" fill="#303030"/></g>
<g id="tpl"><rect x="6" y="3" width="18" height="19" fill="#a8a8a8"/><rect x="8" y="3" width="14" height="17.2" fill="#fff"/><rect x="8" y="0" width="9.3" height="3" fill="url(#gbh)"/><path d="M9.500 11.500 h11.500 M9.500 14.500 h11.500" stroke="#b4b4b4" stroke-width="0.800"/><path d="M9.500 17.300 h11.500" stroke="#b8b8b8" stroke-width="1.600"/><path d="M14.200 4 v10.500" stroke="#808080" stroke-width="0.700"/><rect x="2" y="6" width="2" height="4.500" fill="#6c6408"/><rect x="5" y="6" width="2.500" height="4.500" fill="#6c6408"/><path d="M9 6 h4.500 v-2.300 l4.200 4.300 l-4.200 4.300 v-2.300 h-4.500 z" fill="#f8e838" stroke="#6c6408" stroke-width="0.900" stroke-linejoin="round"/></g>
<linearGradient id="gtb" x1="0" y1="0" x2="0.6" y2="1"><stop offset="0" stop-color="#6c8cd4"/><stop offset="0.6" stop-color="#3c5cb0"/><stop offset="1" stop-color="#1c3484"/></linearGradient><g id="treeic"><rect x="0" y="0" width="10" height="10" fill="url(#gtb)"/><rect x="2" y="2" width="6" height="1.500" fill="#9cb8f0" opacity=".8"/><rect x="2" y="4" width="6" height="2" fill="#fff"/><rect x="2" y="7" width="6" height="1" fill="#5c7cc8" opacity=".8"/><path d="M4 11 h2 v0.800 h-2z M4 13.800 h2 v1 h-2z M4 16 h2 v2 h-2z M7 16 h1.200 v2 h-1.200z M10 16 h1.200 v2 h-1.200z" fill="#000"/><rect x="12" y="12" width="9" height="9" fill="url(#gtb)"/><path d="M16.500 14 v5 M14 16.500 h5" stroke="#fff" stroke-width="2"/></g>
<linearGradient id="ghl" x1="0" y1="0" x2="1" y2="1"><stop offset="0" stop-color="#94acdc"/><stop offset="0.5" stop-color="#4c70b8"/><stop offset="1" stop-color="#264a94"/></linearGradient><g id="hlp"><path d="M1.500 0 H18 V20 H16 V3 H1.500 Z" fill="#3458a4"/><rect x="1.500" y="0" width="16.500" height="1.300" fill="#1c3c84"/><rect x="16" y="2.500" width="1.300" height="17.500" fill="#fff"/><rect x="0" y="3" width="16" height="18" fill="url(#ghl)"/><text x="7.800" y="18" font-family="Liberation Sans,sans-serif" font-weight="bold" font-size="15" text-anchor="middle" fill="#fff">?</text></g>
<radialGradient id="gback" cx="0.5" cy="0.8" r="0.7"><stop offset="0" stop-color="#7ac040"/><stop offset="1" stop-color="#3a8a4a"/></radialGradient>
<g id="back"><circle cx="11" cy="11" r="9.8" fill="url(#gback)"/><path d="M4.5 11 L9.5 6.5 L9.5 9.5 L16.5 9.5 L16.5 12.5 L9.5 12.5 L9.5 15.5 Z" fill="#fff"/></g>
<radialGradient id="gmag" cx="0.4" cy="0.35" r="0.75"><stop offset="0" stop-color="#d8ffff"/><stop offset="0.5" stop-color="#48d0f8"/><stop offset="1" stop-color="#1c8cec"/></radialGradient>
<g id="mag"><path d="M13.500 13 L20.500 20.500" stroke="#6c88b4" stroke-width="3.600" stroke-linecap="round"/><path d="M13.500 13 L20.500 20.500" stroke="#d0e4f8" stroke-width="1.300" stroke-linecap="round"/><circle cx="8.300" cy="8" r="6.700" fill="url(#gmag)" stroke="#2464d4" stroke-width="1.700"/><path d="M4.500 6 Q6 3.500 9 3.500" fill="none" stroke="#fff" stroke-width="1.300" opacity=".8"/></g>
<linearGradient id="gdd" x1="0" y1="0" x2="0" y2="1"><stop offset="0" stop-color="#c4d4f0"/><stop offset="1" stop-color="#5c7cc4"/></linearGradient><linearGradient id="gdd2" x1="0" y1="0" x2="0" y2="1"><stop offset="0" stop-color="#86a0dc"/><stop offset="1" stop-color="#28489c"/></linearGradient>
<g id="dd"><path d="M1 2 L4 0 L12 7 L20 0 L23 2 L23 4 L12 12.500 L1 4 Z" fill="url(#gdd)" stroke="#fff" stroke-width="0.600" stroke-opacity=".7"/><path d="M1 10 L4 8 L12 15 L20 8 L23 10 L23 12.500 L12 21.500 L1 12.500 Z" fill="url(#gdd2)" stroke="#fff" stroke-width="0.600" stroke-opacity=".7"/></g><g id="du"><path d="M12 0.500 L23 9.500 L23 12 L20 13 L12 6 L4 13 L1 12 L1 9.500 Z" fill="url(#gdd)" stroke="#fff" stroke-width="0.600" stroke-opacity=".7"/><path d="M12 9.500 L23 18.500 L23 21 L20 22 L12 15 L4 22 L1 21 L1 18.500 Z" fill="url(#gdd2)" stroke="#fff" stroke-width="0.600" stroke-opacity=".7"/></g>
</defs></svg>

</body></html>
